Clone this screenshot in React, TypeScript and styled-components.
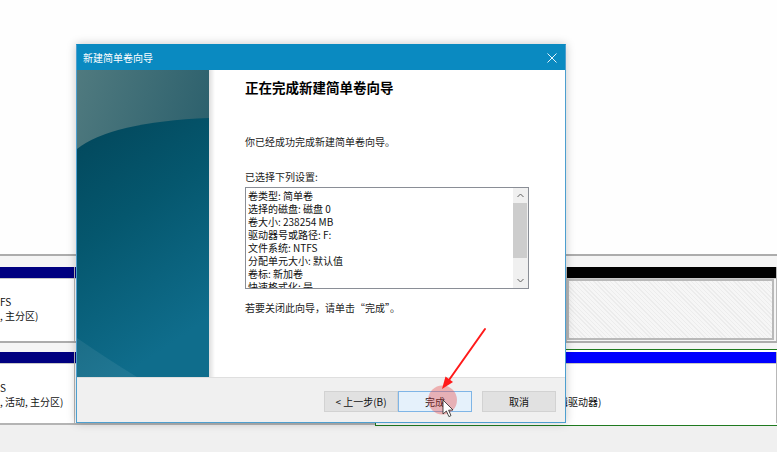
import styled, { createGlobalStyle } from "styled-components";

const GlobalStyle = createGlobalStyle`
  html, body {
    margin: 0;
    padding: 0;
    background: #fdfdfd;
  }
  body {
    font-family: "Noto Sans CJK SC", "Liberation Sans", sans-serif;
  }
`;

const Screen = styled.div`
  position: relative;
  width: 777px;
  height: 452px;
  overflow: hidden;
  background: #fdfdfd;
  font-family: "Noto Sans CJK SC", "Liberation Sans", sans-serif;
  font-size: 10px;
  color: #000;
`;

/* ---------- disk management view behind the wizard ---------- */

const DiskView = styled.div`
  display: flex;
  flex-direction: column;
  height: 100%;
`;

const Blank = styled.div`
  flex: none;
  height: 254px;
  background: #fefefe;
`;

interface RowProps {
  $gap: number;
  $height: number;
}

const DiskRow = styled.div<RowProps>`
  flex: none;
  display: flex;
  border-top: 2px solid #acacac;
  padding-top: ${({ $gap }) => $gap}px;
  height: ${({ $height }) => $height}px;
  background: #f5f5f5;
`;

const StatusArea = styled.div`
  flex: 1;
  border-top: 2px solid #b4b4b4;
  background: #f0f0f0;
`;

interface CellProps {
  $width: number;
  $selected?: boolean;
}

const Cell = styled.div<CellProps>`
  flex: none;
  width: ${({ $width }) => $width}px;
  display: flex;
  flex-direction: column;
  box-sizing: border-box;
  border-right: 1px solid #b8b8b8;
  box-shadow: ${({ $selected }) =>
    $selected ? "0 0 0 2px #ffffff, 0 0 0 3px #1f7a1f" : "none"};
  position: relative;
  z-index: ${({ $selected }) => ($selected ? 1 : 0)};
`;

const CellBar = styled.div<{ $color: string }>`
  flex: none;
  height: 11px;
  background: ${({ $color }) => $color};
  border-bottom: 1px solid #c8c8c8;
`;

interface CellBodyProps {
  $top: number;
  $left?: number;
  $hatched?: boolean;
}

const CellBody = styled.div<CellBodyProps>`
  flex: 1;
  box-sizing: border-box;
  overflow: hidden;
  white-space: nowrap;
  padding: ${({ $top, $left }) => `${$top}px 0 0 ${$left ?? 0}px`};
  line-height: 13.5px;
  font-size: 10px;
  color: #111;
  background: ${({ $hatched }) =>
    $hatched
      ? "repeating-linear-gradient(45deg, #ececec 0 1px, #f6f6f6 1px 3px)"
      : "#ffffff"};
  border: ${({ $hatched }) => ($hatched ? "2px solid #b9b9b9" : "none")};
  margin: ${({ $hatched }) => ($hatched ? "0 2px 1px 0" : "0")};
`;

/* ---------- wizard window ---------- */

const Wizard = styled.div`
  position: absolute;
  left: 76px;
  top: 44px;
  width: 490px;
  height: 379px;
  box-sizing: border-box;
  border: 1px solid #4d9fcf;
  border-top-color: #0a8ac1;
  background: #ffffff;
  display: flex;
  flex-direction: column;
  box-shadow: 0 0 9px rgba(0, 0, 0, 0.22);
  z-index: 2;
`;

const TitleBar = styled.div`
  flex: none;
  height: 25px;
  display: flex;
  align-items: center;
  justify-content: space-between;
  padding: 0 8px 0 6px;
  background: #0a8ac1;
  color: #ffffff;
  font-size: 10px;
`;

const CloseIcon = () => (
  <svg width="10" height="10" viewBox="0 0 10 10">
    <path
      d="M0.5 0.5 L9.5 9.5 M9.5 0.5 L0.5 9.5"
      stroke="#e6f4fb"
      strokeWidth="1"
      fill="none"
    />
  </svg>
);

const WizardBody = styled.div`
  flex: none;
  height: 307px;
  display: flex;
`;

const SidePanel = styled.div`
  flex: none;
  width: 132px;
  height: 307px;
  & > svg {
    display: block;
  }
`;

const Content = styled.div`
  flex: 1;
  padding: 9px 20px 0 36px;
  background: linear-gradient(
      to right,
      rgba(0, 0, 0, 0.13),
      rgba(0, 0, 0, 0) 6px
    ),
    #ffffff;
  display: flex;
  flex-direction: column;
`;

const Heading = styled.div`
  font-size: 13.5px;
  font-weight: bold;
  line-height: 16px;
  color: #000;
`;

const Text = styled.div<{ $gap: number }>`
  margin-top: ${({ $gap }) => $gap}px;
  font-size: 10px;
  line-height: 13px;
  color: #222;
`;

const SettingsBox = styled.div`
  margin-top: 4.5px;
  width: 284px;
  height: 102px;
  box-sizing: border-box;
  border: 1px solid #8a8e96;
  display: flex;
  background: #fff;
`;

const SettingsLines = styled.div`
  flex: 1;
  overflow: hidden;
  padding: 1px 2px 0;
  font-size: 10px;
  line-height: 13px;
  color: #111;
  white-space: nowrap;
`;

const ScrollBar = styled.div`
  flex: none;
  width: 15px;
  display: flex;
  flex-direction: column;
  background: #f0f0f0;
`;

const ScrollArrow = styled.div`
  flex: none;
  height: 15px;
  display: flex;
  align-items: center;
  justify-content: center;
`;

const ScrollThumb = styled.div`
  flex: none;
  height: 55px;
  margin: 0 1px 0 0;
  background: #cdcdcd;
`;

const ScrollTrack = styled.div`
  flex: 1;
`;

const Chevron = ({ up }: { up?: boolean }) => (
  <svg width="7" height="5" viewBox="0 0 7 5">
    <polyline
      points={up ? "0.5,4 3.5,1 6.5,4" : "0.5,1 3.5,4 6.5,1"}
      stroke="#606060"
      strokeWidth="1"
      fill="none"
    />
  </svg>
);

const Footer = styled.div`
  flex: 1;
  box-sizing: border-box;
  border-top: 1px solid #dfdfdf;
  background: #f0f0f0;
  display: flex;
  justify-content: flex-end;
  align-items: flex-start;
  padding: 13px 9px 0 0;
`;

interface ButtonProps {
  $primary?: boolean;
  $space?: number;
}

const WizardButton = styled.button<ButtonProps>`
  width: 74px;
  height: 21px;
  margin: 0 0 0 ${({ $space }) => $space ?? 0}px;
  padding: 0;
  box-sizing: border-box;
  font-family: "Noto Sans CJK SC", "Liberation Sans", sans-serif;
  font-size: 10px;
  line-height: 19px;
  color: #111;
  border: 1px solid ${({ $primary }) => ($primary ? "#7fb5e6" : "#d2d2d2")};
  background: ${({ $primary }) => ($primary ? "#e5f1fb" : "#e1e1e1")};
`;

/* ---------- screen-recording annotation ---------- */

const Annotation = styled.svg`
  position: absolute;
  left: 0;
  top: 0;
  z-index: 3;
  pointer-events: none;
`;

const SidePanelArt = () => (
  <svg width="132" height="307" viewBox="0 0 132 307">
    <defs>
      <linearGradient id="sky" x1="0" y1="0" x2="1" y2="0.7">
        <stop offset="0" stopColor="#507a7f" />
        <stop offset="1" stopColor="#215867" />
      </linearGradient>
      <linearGradient id="sea" x1="0" y1="0" x2="0.35" y2="1">
        <stop offset="0" stopColor="#02465a" />
        <stop offset="0.45" stopColor="#05576e" />
        <stop offset="1" stopColor="#0f6d8c" />
      </linearGradient>
    </defs>
    <rect width="132" height="307" fill="url(#sky)" />
    <path d="M0 79 Q34 52 132 48 V307 H0 Z" fill="url(#sea)" />
    <path d="M0 268 Q32 290 60 307 H0 Z" fill="#ffffff" opacity="0.07" />
  </svg>
);

const settings = [
  "卷类型: 简单卷",
  "选择的磁盘: 磁盘 0",
  "卷大小: 238254 MB",
  "驱动器号或路径: F:",
  "文件系统: NTFS",
  "分配单元大小: 默认值",
  "卷标: 新加卷",
  "快速格式化: 是",
];

export default function App() {
  return (
    <Screen>
      <GlobalStyle />
      <DiskView>
        <Blank />
        <DiskRow $gap={11} $height={74}>
          <Cell $width={75}>
            <CellBar $color="#000080" />
            <CellBody $top={16}>
              FS
              <br />, 主分区)
            </CellBody>
          </Cell>
          <Cell $width={492}>
            <CellBar $color="#000080" />
            <CellBody $top={16} />
          </Cell>
          <Cell $width={210}>
            <CellBar $color="#000000" />
            <CellBody $top={16} $hatched />
          </Cell>
        </DiskRow>
        <DiskRow $gap={9} $height={71}>
          <Cell $width={75}>
            <CellBar $color="#000080" />
            <CellBody $top={17}>
              S
              <br />, 活动, 主分区)
            </CellBody>
          </Cell>
          <Cell $width={303}>
            <CellBar $color="#000080" />
            <CellBody $top={17} />
          </Cell>
          <Cell $width={399} $selected>
            <CellBar $color="#0000ff" />
            <CellBody $top={30.5} $left={180}>
              辑驱动器)
            </CellBody>
          </Cell>
        </DiskRow>
        <StatusArea />
      </DiskView>

      <Wizard>
        <TitleBar>
          <span>新建简单卷向导</span>
          <CloseIcon />
        </TitleBar>
        <WizardBody>
          <SidePanel>
            <SidePanelArt />
          </SidePanel>
          <Content>
            <Heading>正在完成新建简单卷向导</Heading>
            <Text $gap={39.5}>你已经成功完成新建简单卷向导。</Text>
            <Text $gap={22}>已选择下列设置:</Text>
            <SettingsBox>
              <SettingsLines>
                {settings.map((line) => (
                  <div key={line}>{line}</div>
                ))}
              </SettingsLines>
              <ScrollBar>
                <ScrollArrow>
                  <Chevron up />
                </ScrollArrow>
                <ScrollThumb />
                <ScrollTrack />
                <ScrollArrow>
                  <Chevron />
                </ScrollArrow>
              </ScrollBar>
            </SettingsBox>
            <Text $gap={11.5}>若要关闭此向导，请单击“完成”。</Text>
          </Content>
        </WizardBody>
        <Footer>
          <WizardButton>&lt; 上一步(B)</WizardButton>
          <WizardButton $primary>完成</WizardButton>
          <WizardButton $space={10}>取消</WizardButton>
        </Footer>
      </Wizard>

      <Annotation width="777" height="452" viewBox="0 0 777 452">
        <circle cx="442.5" cy="400" r="14.5" fill="rgba(232, 70, 70, 0.38)" />
        <line
          x1="485"
          y1="329"
          x2="449"
          y2="380"
          stroke="#ff1a1a"
          strokeWidth="2"
          strokeLinecap="round"
        />
        <polygon points="442,389 453,382 445.5,376.5" fill="#ff1a1a" />
        <path
          d="M443 400 L443 414 L446.4 411 L448.9 416.6 L451 415.6 L448.6 410.2 L453 410 Z"
          fill="#ffffff"
          stroke="#222"
          strokeWidth="0.8"
          strokeLinejoin="round"
        />
      </Annotation>
    </Screen>
  );
}
